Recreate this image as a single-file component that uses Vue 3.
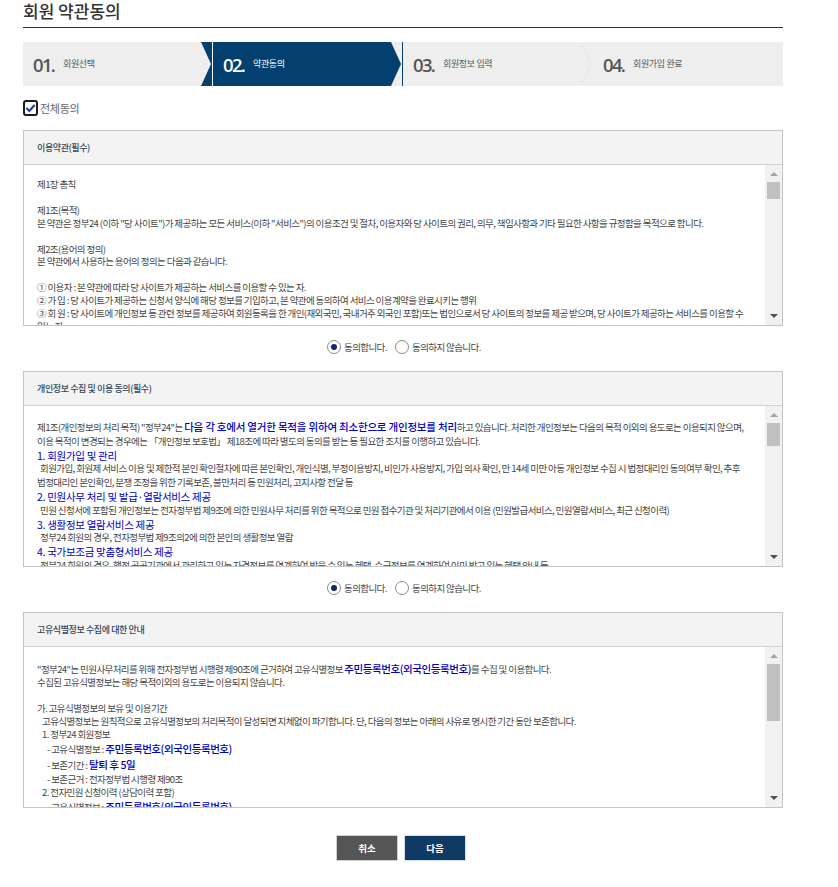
<script setup>
const steps = [
  { no: '01.', label: '회원선택', kind: 'before' },
  { no: '02.', label: '약관동의', kind: 'active' },
  { no: '03.', label: '회원정보 입력', kind: 'next' },
  { no: '04.', label: '회원가입 완료', kind: 'last' }
]
</script>

<template>
  <div class="page">
    <h1 class="title">회원 약관동의</h1>

    <ol class="steps">
      <li v-for="s in steps" :key="s.no" class="step" :class="s.kind">
        <span class="no">{{ s.no }}</span>
        <span class="label">{{ s.label }}</span>
        <svg v-if="s.kind === 'before'" class="sep" viewBox="0 0 12 44" aria-hidden="true">
          <rect width="12" height="44" fill="#04406f" />
          <polygon points="0,0 10,22 0,44" fill="#eeeeee" />
          <rect x="11" width="1" height="44" fill="#ffffff" />
        </svg>
        <svg v-if="s.kind === 'active'" class="sep" viewBox="0 0 12 44" aria-hidden="true">
          <rect width="12" height="44" fill="#eeeeee" />
          <polygon points="0,0 10,22 0,44" fill="#04406f" />
          <rect x="11" width="1" height="44" fill="#04406f" />
        </svg>
        <svg v-if="s.kind === 'next'" class="sep" viewBox="0 0 12 44" aria-hidden="true">
          <polyline points="0,0 10,22 0,44" fill="none" stroke="#e4e4e4" stroke-width="1" />
        </svg>
      </li>
    </ol>

    <label class="all">
      <span class="box">
        <svg viewBox="0 0 12 12" width="12" height="12" aria-hidden="true">
          <path d="M1.5 6 L4.8 9.2 L10.5 2.8" fill="none" stroke="#2a3f8f" stroke-width="2.4" />
        </svg>
      </span>
      <span>전체동의</span>
    </label>

    <section class="panel">
      <header class="panel-head">이용약관(필수)</header>
      <div class="panel-body">
        <div class="text t1">
          <p>제1장 총칙</p>
          <p class="gap">제1조(목적)</p>
          <p>본 약관은 정부24 (이하 "당 사이트")가 제공하는 모든 서비스(이하 "서비스")의 이용조건 및 절차, 이용자와 당 사이트의 권리, 의무, 책임사항과 기타 필요한 사항을 규정함을 목적으로 합니다.</p>
          <p class="gap">제2조(용어의 정의)</p>
          <p>본 약관에서 사용하는 용어의 정의는 다음과 같습니다.</p>
          <p class="gap">① 이용자 : 본 약관에 따라 당 사이트가 제공하는 서비스를 이용할 수 있는 자.</p>
          <p>② 가 입 : 당 사이트가 제공하는 신청서 양식에 해당 정보를 기입하고, 본 약관에 동의하여 서비스 이용계약을 완료시키는 행위</p>
          <p>③ 회 원 : 당 사이트에 개인정보 등 관련 정보를 제공하여 회원등록을 한 개인(재외국민, 국내거주 외국인 포함)또는 법인으로서 당 사이트의 정보를 제공 받으며, 당 사이트가 제공하는 서비스를 이용할 수 있는 자.</p>
        </div>
        <div class="bar">
          <i class="up"></i>
          <b class="thumb th1"></b>
          <i class="down"></i>
        </div>
      </div>
    </section>

    <div class="radios">
      <span class="radio on"></span><span class="rl">동의합니다.</span>
      <span class="radio"></span><span class="rl">동의하지 않습니다.</span>
    </div>

    <section class="panel">
      <header class="panel-head">개인정보 수집 및 이용 동의(필수)</header>
      <div class="panel-body">
        <div class="text t2">
          <p>제1조(개인정보의 처리 목적) "정부24"는 <strong>다음 각 호에서 열거한 목적을 위하여 최소한으로 개인정보를 처리</strong>하고 있습니다. 처리한 개인정보는 다음의 목적 이외의 용도로는 이용되지 않으며, 이용 목적이 변경되는 경우에는 「개인정보 보호법」 제18조에 따라 별도의 동의를 받는 등 필요한 조치를 이행하고 있습니다.</p>
          <p class="h">1. 회원가입 및 관리</p>
          <p>&nbsp;&nbsp;회원가입, 회원제 서비스 이용 및 제한적 본인 확인절차에 따른 본인확인, 개인식별, 부정이용방지, 비인가 사용방지, 가입 의사 확인, 만 14세 미만 아동 개인정보 수집 시 법정대리인 동의여부 확인, 추후 법정대리인 본인확인, 분쟁 조정을 위한 기록보존, 불만처리 등 민원처리, 고지사항 전달 등</p>
          <p class="h">2. 민원사무 처리 및 발급·열람서비스 제공</p>
          <p>&nbsp;&nbsp;민원 신청서에 포함된 개인정보는 전자정부법 제9조에 의한 민원사무 처리를 위한 목적으로 민원 접수기관 및 처리기관에서 이용 (민원발급서비스, 민원열람서비스, 최근 신청이력)</p>
          <p class="h">3. 생활정보 열람서비스 제공</p>
          <p>&nbsp;&nbsp;정부24 회원의 경우, 전자정부법 제9조의2에 의한 본인의 생활정보 열람</p>
          <p class="h">4. 국가보조금 맞춤형서비스 제공</p>
          <p>&nbsp;&nbsp;정부24 회원의 경우, 행정 공공기관에서 관리하고 있는 자격정보를 연계하여 받을 수 있는 혜택, 수급정보를 연계하여 이미 받고 있는 혜택 안내 등</p>
        </div>
        <div class="bar">
          <i class="up"></i>
          <b class="thumb th2"></b>
          <i class="down"></i>
        </div>
      </div>
    </section>

    <div class="radios">
      <span class="radio on"></span><span class="rl">동의합니다.</span>
      <span class="radio"></span><span class="rl">동의하지 않습니다.</span>
    </div>

    <section class="panel">
      <header class="panel-head">고유식별정보 수집에 대한 안내</header>
      <div class="panel-body">
        <div class="text t3">
          <p>"정부24"는 민원사무처리를 위해 전자정부법 시행령 제90조에 근거하여 고유식별정보 <strong>주민등록번호(외국인등록번호)</strong>를 수집 및 이용합니다.</p>
          <p>수집된 고유식별정보는 해당 목적이외의 용도로는 이용되지 않습니다.</p>
          <p class="gap">가. 고유식별정보의 보유 및 이용기간</p>
          <p class="i1">고유식별정보는 원칙적으로 고유식별정보의 처리목적이 달성되면 지체없이 파기합니다. 단, 다음의 정보는 아래의 사유로 명시한 기간 동안 보존합니다.</p>
          <p class="i1">1. 정부24 회원정보</p>
          <p class="i2 tall">- 고유식별정보 : <strong>주민등록번호(외국인등록번호)</strong></p>
          <p class="i2 tall">- 보존기간 : <strong>탈퇴 후 5일</strong></p>
          <p class="i2">- 보존근거 : 전자정부법 시행령 제90조</p>
          <p class="i1">2. 전자민원 신청이력 (상담이력 포함)</p>
          <p class="i2 tall">- 고유식별정보 : <strong>주민등록번호(외국인등록번호)</strong></p>
        </div>
        <div class="bar">
          <i class="up"></i>
          <b class="thumb th3"></b>
          <i class="down"></i>
        </div>
      </div>
    </section>

    <div class="actions">
      <button type="button" class="btn cancel">취소</button>
      <button type="button" class="btn next-btn">다음</button>
    </div>
  </div>
</template>

<style>
html, body { background: #fff; }
</style>

<style scoped>
.page {
  width: 760px;
  height: 887px;
  margin-left: 23px;
  box-sizing: border-box;
  overflow: hidden;
  font-family: "Noto Sans CJK KR", "Liberation Sans", sans-serif;
  color: #444;
}
.title {
  margin: 0;
  height: 26px;
  padding-top: 1px;
  border-bottom: 1px solid #333;
  box-sizing: content-box;
  font-size: 17px;
  font-weight: 500;
  line-height: 19px;
  color: #333;
}
.steps {
  display: flex;
  list-style: none;
  margin: 14px 0 0;
  padding: 0;
  height: 44px;
  background: #eeeeee;
}
.step {
  position: relative;
  width: 190px;
  display: flex;
  align-items: center;
  padding-left: 10px;
  box-sizing: border-box;
}
.step.active { background: #04406f; color: #fff; }
.no {
  font-family: "Open Sans", "Liberation Sans", sans-serif;
  font-size: 18.5px;
  font-weight: 600;
  letter-spacing: -1.7px;
  width: 30px;
  color: #555;
}
.active .no { color: #fff; }
.label { font-size: 9px; letter-spacing: -0.35px; color: #555; line-height: 1; margin-top: -1px; }
.active .label { color: #fff; }
.sep {
  position: absolute;
  right: 0;
  top: 0;
  width: 12px;
  height: 44px;
}
.all {
  display: flex;
  align-items: center;
  gap: 2px;
  height: 16px;
  margin-top: 14px;
  font-size: 11px;
  letter-spacing: -0.3px;
  color: #666;
}
.box {
  width: 15px;
  height: 16px;
  box-sizing: border-box;
  border: 2px solid #1c1c1c;
  border-radius: 3px;
  display: flex;
  align-items: center;
  justify-content: center;
}
.panel {
  border: 1px solid #c4c4c4;
  height: 196px;
  box-sizing: border-box;
  display: flex;
  flex-direction: column;
}
.all + .panel { margin-top: 14px; }
.panel-head {
  height: 33px;
  flex: none;
  background: #f3f3f3;
  border-bottom: 1px solid #d0d0d0;
  padding-left: 13px;
  font-size: 9px;
  line-height: 33px;
  letter-spacing: -0.4px;
  color: #34465a;
  font-weight: 500;
}
.panel-body {
  flex: 1;
  min-height: 0;
  display: flex;
}
.text {
  flex: 1;
  min-width: 0;
  overflow: hidden;
  padding: 14px 13px 0 13px;
  font-size: 9.5px;
  letter-spacing: -0.6px;
  color: #444;
  word-break: keep-all;
}
.text p { margin: 0; }
.t1 { line-height: 12.9px; padding-top: 13px; }
.t1 .gap { margin-top: 12.9px; }
.t2 { line-height: 13.8px; padding-top: 14px; }
.t3 { line-height: 13px; padding-top: 15px; }
.t3 .gap { margin-top: 13px; }
.t3 .tall { line-height: 15px; }
.i1 { padding-left: 5px; }
.i2 { padding-left: 10px; }
.text strong {
  color: #0000c4;
  font-size: 10.5px;
  font-weight: 500;
  letter-spacing: -0.42px;
}
.t2 strong { letter-spacing: -0.2px; }
.h {
  color: #0000c4;
  font-size: 10.5px;
  font-weight: 400;
  letter-spacing: -0.3px;
}
.bar {
  width: 17px;
  flex: none;
  background: #f1f1f1;
  display: flex;
  flex-direction: column;
  align-items: center;
}
.up, .down {
  width: 0;
  height: 0;
  border-left: 4px solid transparent;
  border-right: 4px solid transparent;
}
.up {
  border-bottom: 4px solid #a3a3a3;
  margin-top: 7px;
  margin-bottom: 6px;
}
.down {
  border-top: 4px solid #505050;
  margin-top: auto;
  margin-bottom: 7px;
}
.thumb { width: 13px; background: #c1c1c1; display: block; }
.th1 { height: 17px; }
.th2 { height: 23px; }
.th3 { height: 57px; }
.radios {
  height: 45px;
  display: flex;
  align-items: center;
  padding: 0 0 3px 304px;
  font-size: 9.5px;
  letter-spacing: -0.6px;
  color: #444;
  box-sizing: border-box;
}
.radio {
  width: 14px;
  height: 14px;
  box-sizing: border-box;
  border: 1px solid #8a8a8a;
  border-radius: 50%;
  background: #fff;
  position: relative;
  flex: none;
}
.radio.on::after {
  content: "";
  position: absolute;
  left: 3px;
  top: 3px;
  width: 6px;
  height: 6px;
  border-radius: 50%;
  background: #14216e;
}
.rl { margin-left: 3px; width: 51px; white-space: nowrap; }
.actions {
  display: flex;
  justify-content: center;
  gap: 6px;
  margin-top: 27px;
  padding-right: 4px;
}
.btn {
  width: 62px;
  height: 26px;
  border: 1px solid #d3dde6;
  color: #fff;
  font-family: inherit;
  font-size: 9.5px;
  font-weight: 700;
  padding: 0;
}
.cancel { background: #555555; border-color: #cfcfcf; }
.next-btn { background: #0f3a63; }
</style>
